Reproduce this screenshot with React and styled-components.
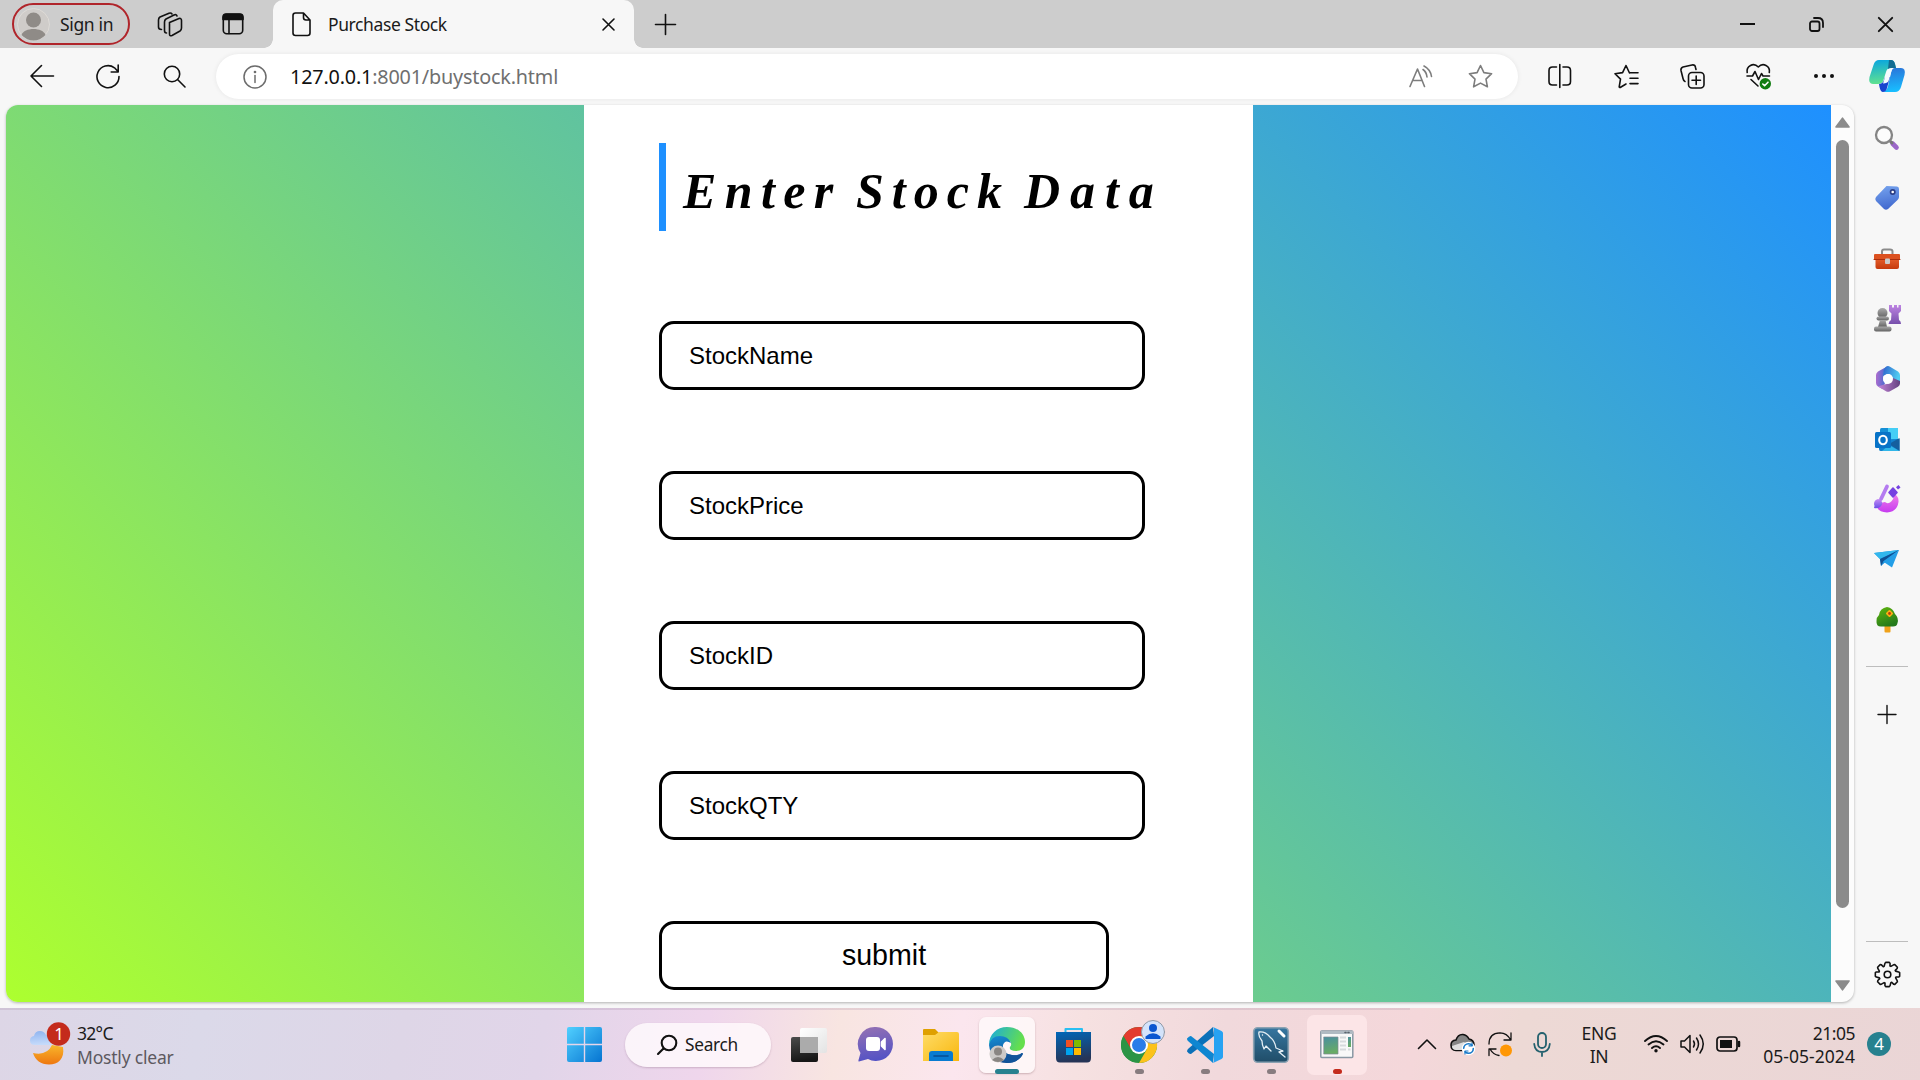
import React from "react";
import styled, { createGlobalStyle } from "styled-components";

const GlobalStyle = createGlobalStyle`
  * { box-sizing: border-box; }
  body { margin: 0; overflow: hidden; background: #f7f7f7; }
  svg { display: block; flex: none; overflow: visible; }
`;

const UI = `"Noto Sans", "Open Sans", sans-serif`;

const Desktop = styled.div`
  width: 1920px;
  height: 1080px;
  display: flex;
  flex-direction: column;
  overflow: hidden;
  background: #f7f7f7;
  font-family: ${UI};
  color: #1a1a1a;
`;

const Label = styled.span`
  font-size: ${(p) => p.$size || 18}px;
  letter-spacing: ${(p) => p.$track || 0}px;
  color: ${(p) => p.$color || "#1b1b1b"};
  line-height: ${(p) => p.$line || 24}px;
  white-space: nowrap;
`;

const Cell = styled.div`
  width: ${(p) => p.$w}px;
  height: 100%;
  margin-left: ${(p) => p.$ml || 0}px;
  flex: none;
  display: flex;
  align-items: center;
  justify-content: center;
`;

/* ---------- tab strip ---------- */

const TabStrip = styled.header`
  height: 48px;
  flex: none;
  display: flex;
  align-items: center;
  background: #cdcdcd;
`;

const SignIn = styled.div`
  width: 118px;
  height: 42px;
  margin-left: 12px;
  padding-left: 3px;
  display: flex;
  align-items: center;
  gap: 10px;
  border: 2px solid #b0252b;
  border-radius: 21px;
`;

const Tab = styled.div`
  position: relative;
  width: 361px;
  height: 48px;
  margin-left: 10px;
  padding-left: 19px;
  display: flex;
  align-items: center;
  background: #f7f7f7;
  border-radius: 10px 10px 0 0;
  &::before, &::after {
    content: "";
    position: absolute;
    bottom: 0;
    width: 9px;
    height: 9px;
  }
  &::before { left: -9px; background: radial-gradient(circle at 0 0, #cdcdcd 8.5px, #f7f7f7 9px); }
  &::after { right: -9px; background: radial-gradient(circle at 100% 0, #cdcdcd 8.5px, #f7f7f7 9px); }
`;

const TabTitle = styled(Label)`
  width: 274px;
  margin-left: 17px;
`;

const WindowButtons = styled.div`
  height: 100%;
  margin-left: auto;
  display: flex;
`;

/* ---------- toolbar ---------- */

const Toolbar = styled.nav`
  height: 57px;
  flex: none;
  padding: 0 0 1px 9px;
  display: flex;
  align-items: center;
`;

const AddressBar = styled.div`
  width: 1302px;
  height: 45px;
  margin: 1px 9px 0;
  padding-left: 27px;
  display: flex;
  align-items: center;
  background: #fff;
  border-radius: 23px;
  box-shadow: 0 0 5px rgba(0, 0, 0, 0.07);
`;

const Url = styled(Label)`
  flex: 1;
  margin-left: 23px;
  b { font-weight: 400; color: #111; }
`;

/* ---------- content ---------- */

const Body = styled.main`
  height: 903px;
  flex: none;
  display: flex;
`;

const Viewport = styled.section`
  width: 1848px;
  height: 897px;
  margin-left: 6px;
  display: flex;
  overflow: hidden;
  background: #fcfcfc;
  border-radius: 12px;
  box-shadow: 0 1px 3px rgba(0, 0, 0, 0.28);
`;

const Page = styled.div`
  width: 1825px;
  height: 897px;
  padding-left: 578px;
  background: linear-gradient(45deg, greenyellow, dodgerblue);
`;

const Form = styled.form`
  width: 669px;
  height: 897px;
  padding: 38px 0 0 75px;
  background: #fff;
`;

const Heading = styled.h1`
  height: 88px;
  margin: 0 0 90px;
  padding: 20px 0 0 17px;
  display: flex;
  border-left: 7px solid dodgerblue;
  font: italic bold 50px/56px "Liberation Serif", serif;
  color: #000;
`;

const Word = styled.span`
  width: ${(p) => p.$w}px;
  letter-spacing: ${(p) => p.$track}px;
  white-space: nowrap;
`;

const Field = styled.input`
  display: block;
  width: 486px;
  height: 69px;
  margin: 0 0 81px;
  padding: 0 27px;
  border: 3px solid #000;
  border-radius: 15px;
  background: #fff;
  color: #000;
  font: 24px "Liberation Sans", Arial, sans-serif;
  outline: none;
  &::placeholder { color: #000; opacity: 1; }
`;

const Submit = styled.button`
  display: block;
  width: 450px;
  height: 69px;
  padding: 0;
  border: 3px solid #000;
  border-radius: 15px;
  background: #fff;
  color: #000;
  font: 28.6px "Liberation Sans", Arial, sans-serif;
`;

const Scrollbar = styled.div`
  width: 23px;
  padding: 12px 0 11px 4px;
  display: flex;
  flex-direction: column;
`;

const Thumb = styled.div`
  width: 13px;
  height: 768px;
  margin: 12px 0 auto 1px;
  border-radius: 7px;
  background: #8b8b8b;
`;

const Sidebar = styled.aside`
  width: 66px;
  display: flex;
  flex-direction: column;
  align-items: center;
  padding-top: 3px;
`;

const SideItem = styled.div`
  height: 60.2px;
  flex: none;
  display: flex;
  align-items: center;
`;

const Divider = styled.hr`
  width: 42px;
  height: 1px;
  flex: none;
  margin: ${(p) => p.$m};
  border: 0;
  background: #bdbdbd;
`;

/* ---------- taskbar ---------- */

const Taskbar = styled.footer`
  height: 72px;
  flex: none;
  display: flex;
  align-items: center;
  background:
    linear-gradient(rgba(150, 120, 150, 0.2), rgba(150, 120, 150, 0.2)) 0 0 / 1410px 2px no-repeat,
    linear-gradient(100deg, #ddd6e6 0, #dbd9e9 200px, #ded6e7 400px, #e1d5e9 540px, #efd6ec 700px, #f8e5e1 830px, #fbe6ee 950px, #f6e1e1 1070px, #f1d9dc 1210px, #f4d7da 1400px, #edd9d5 1500px, #ead5d6 1920px);
`;

const Weather = styled.div`
  width: 551px;
  padding-left: 29px;
  display: flex;
  align-items: center;
  gap: 11px;
`;

const Stack = styled.div`
  width: ${(p) => (p.$w ? `${p.$w}px` : "auto")};
  padding-top: 1px;
  display: flex;
  flex-direction: column;
  align-items: ${(p) => p.$align || "flex-start"};
`;

const SearchPill = styled.div`
  width: 146px;
  height: 44px;
  margin: 2px 5px 0 8px;
  padding-left: 32px;
  display: flex;
  align-items: center;
  gap: 8px;
  border-radius: 22px;
  background: rgba(255, 250, 252, 0.82);
  box-shadow: 0 1px 2px rgba(100, 60, 90, 0.25);
`;

const TaskButton = styled.div`
  position: relative;
  width: 66px;
  height: 72px;
  flex: none;
  padding-top: 1px;
  display: flex;
  align-items: center;
  justify-content: center;
`;

const Tile = styled.div`
  width: ${(p) => p.$s}px;
  height: ${(p) => p.$s}px;
  display: flex;
  align-items: center;
  justify-content: center;
  border-radius: 7px;
  background: ${(p) => p.$bg};
  box-shadow: ${(p) => (p.$edge ? "0 1px 2px rgba(120,80,90,.35)" : "none")};
`;

const Running = styled.i`
  position: absolute;
  bottom: 6px;
  left: 50%;
  width: ${(p) => p.$w || 9}px;
  height: 5px;
  margin-left: ${(p) => -(p.$w || 9) / 2}px;
  border-radius: 3px;
  background: ${(p) => p.$c || "#877c7f"};
`;

const Count = styled.div`
  width: 24px;
  height: 24px;
  margin-left: 12px;
  border-radius: 50%;
  background: #27818f;
  color: #fff;
  font-size: 17px;
  line-height: 24px;
  text-align: center;
`;

const Svg = ({ w, h = w, children, sw = 1.6, c = "#111", ...r }) => (
  <svg width={w} height={h} viewBox={`0 0 ${w} ${h}`} fill="none" stroke={c} strokeWidth={sw} strokeLinecap="round" strokeLinejoin="round" {...r}>
    {children}
  </svg>
);

const Grad = ({ id, a, b, x2 = 1, y2 = 1 }) => (
  <linearGradient id={id} x1="0" y1="0" x2={x2} y2={y2}>
    <stop offset="0" stopColor={a} />
    <stop offset="1" stopColor={b} />
  </linearGradient>
);

const Star = "M12.5 1.5 15.9 8.6 23.6 9.7 18 15.1 19.4 22.8 12.5 19.1 5.6 22.8 7 15.1 1.4 9.7 9.1 8.6Z";

const Avatar = () => (
  <Svg w={33} stroke="none">
    <circle cx="16.5" cy="16.5" r="16" fill="#cfccc9" stroke="#dedbd7" strokeWidth="1" />
    <circle cx="16.5" cy="12" r="7.5" fill="#8f8b87" />
    <path d="M4.5 27C7 19 26 19 28.500 27Q23 32.500 16.500 32.500T4.500 27Z" fill="#8f8b87" />
  </Svg>
);

const Workspaces = () => (
  <Svg w={26} h={25}>
    <path d="M12.500 10.500 22 6.500Q24.500 6 24.500 8.500V16Q24.500 18 23 19L15 23.500Q12.500 24.500 12.500 22V12Z" />
    <path d="M9.500 21Q7.500 21 7.500 18.500V10Q7.500 8 9 7L17 3Q19.500 2 20 4" />
    <path d="M4.500 17.500Q1.500 17.500 1.500 15V8Q1.500 6 3 5L12 1.200Q14 .5 15 2" />
  </Svg>
);

const TabActions = () => (
  <Svg w={22}>
    <rect x="1.300" y="1.300" width="19.400" height="19.400" rx="3.500" />
    <path d="M1 6.500V4Q1 1 4 1H18Q21 1 21 4V6.500Z" fill="#111" />
    <path d="M7 7V20.500" />
  </Svg>
);

const FileIcon = () => (
  <Svg w={19} h={25}>
    <path d="M11.500 1H3.500Q1 1 1 3.500V21Q1 23.500 3.500 23.500H15.500Q18 23.500 18 21V8ZM11.500 1V5.500Q11.500 8 14 8H18" />
  </Svg>
);

const BackIcon = () => <Svg w={24}><path d="M23.500 12H1M11.500 1.500 1 12 11.500 22.500" /></Svg>;
const RefreshIcon = () => <Svg w={24} h={25}><path d="M23 12.500A11 11 0 1 1 18.500 3.800L22 7.500M22.200 1V8H15.200" /></Svg>;
const LensIcon = () => <Svg w={23}><circle cx="9" cy="9" r="7.700" /><path d="M14.800 14.800 22 22" /></Svg>;
const InfoIcon = () => (
  <Svg w={24} c="#6c6c6c" sw={1.500}>
    <circle cx="12" cy="12" r="11" /><path d="M12 10.500V17.500" /><circle cx="12" cy="7" r=".6" fill="#6c6c6c" />
  </Svg>
);
const ReadAloud = () => (
  <Svg w={24} c="#7d7d7d"><path d="M1 21.500 8.500 4 15.500 21.500M3.500 15.500H13M14 4.500Q17.500 7 18 12M15 1Q21.500 4.500 22.500 11.500" /></Svg>
);
const SplitIcon = () => (
  <Svg w={24}><path d="M8.500 3H4.500Q1 3 1 6.500V17.500Q1 21 4.500 21H8.500M15 3H19Q22.500 3 22.500 6.500V17.500Q22.500 21 19 21H15M11.800 .5V23.500" /></Svg>
);
const FavList = () => (
  <Svg w={25}>
    <path d="M15.500 9 12 1.500 8.600 8.600 1 9.700 6.500 15.100 5.200 22.800Q5.500 24 7 23L12 20M16 8.800H24M16 14.200H24M16 19.600H24" />
  </Svg>
);
const Collections = () => (
  <Svg w={25}>
    <rect x="8.500" y="8.500" width="15.500" height="15.500" rx="3.500" />
    <path d="M16.200 12V20.500M12 16.200H20.500M5 17.500Q3.500 17 3 14.500L1 6.500Q.5 4 3 3L12 1Q15 .5 15.500 3.500L16 5.500" />
  </Svg>
);
const Health = () => (
  <Svg w={25} h={26}>
    <path d="M1.200 9.500C0 3 7.500-1 12.300 4 17-1 24.500 3 23.300 9.500M1 13H6.500L9 8.500 12.500 16.500 15.500 10.500 17 13H23.500M5 16.500 12 23" />
    <circle cx="19.300" cy="20.700" r="5.700" fill="#107c10" stroke="none" />
    <path d="M16.800 21 18.600 22.700 22 19.200" stroke="#fff" />
  </Svg>
);
const Dots = () => <Svg w={22} h={6} stroke="none" fill="#111"><circle cx="3" cy="3" r="2" /><circle cx="11" cy="3" r="2" /><circle cx="19" cy="3" r="2" /></Svg>;

const Copilot = () => (
  <Svg w={36} h={34} stroke="none">
    <defs>
      <Grad id="cp1" a="#08a5e0" b="#5fe191" x2={0.1} />
      <Grad id="cp2" a="#2b73d8" b="#18bdff" x2={0.1} />
    </defs>
    <path d="M10 1H22Q25 1 26 5L27 9H22Q18 9 17 13L14.500 21Q13.500 25 9 25H4Q-1 25 .5 18L4.500 6Q6 1 10 1Z" fill="url(#cp1)" />
    <path d="M20 1H22Q25 1 26 5L27 9H22Q20 9 19 10Z" fill="#136b91" />
    <path d="M26 9H32Q37 9 35.500 16L32 28Q30.500 33 26 33H14Q18 32 19 27L22 14Q23 9 26 9Z" fill="url(#cp2)" />
    <path d="M10 25Q13.500 25 15 21L16 18H21L18 29Q17 33 14 33 11.500 33 10.500 28Z" fill="#1744cf" />
    <path d="M19 10H23L19.500 22Q18.500 24 14 24.500L17 15Z" fill="#f5fbff" />
  </Svg>
);

/* sidebar drawings, each on a 26px grid */
const SideSearch = () => (
  <Svg w={26}>
    <path d="M18.500 18.500 22.500 22.500" stroke="#9b66c9" strokeWidth="4.600" />
    <path d="M16 16 18 18" stroke="#777" strokeWidth="3" />
    <circle cx="10" cy="10" r="8" stroke="#858585" strokeWidth="2.300" fill="#fcfcfc" />
  </Svg>
);
const SideTag = () => (
  <Svg w={26} stroke="none">
    <defs><Grad id="tag" a="#77a5ef" b="#436bd0" x2={0.2} /></defs>
    <path d="M12.500 1 23 1.500Q25 1.500 25 4V12Q25 13.500 23.500 15L14 24Q12 25.500 10 24L2 16Q.5 14 2 12Z" fill="url(#tag)" />
    <circle cx="18.700" cy="7" r="3" fill="#2b3e86" /><circle cx="18.700" cy="7" r="1.300" fill="#fff" />
  </Svg>
);
const SideToolbox = () => (
  <Svg w={26} h={21} stroke="none">
    <defs><Grad id="tb" a="#ed6632" b="#c53a0d" x2={0} /></defs>
    <path d="M8 8V3.500Q8 1.500 10 1.500H16Q18.500 1.500 18.500 3.500V8" stroke="#8b8b8b" strokeWidth="2" />
    <rect x="1.500" y="8" width="23.500" height="13" rx="2" fill="url(#tb)" />
    <rect x="0" y="6" width="26" height="6" rx="1" fill="#dc5120" />
    <path d="M0 11.500H26" stroke="#a92e0e" strokeWidth="1" />
    <rect x="11" y="10.500" width="5" height="5.500" rx="1" fill="#cbcbcb" />
  </Svg>
);
const SideChess = () => (
  <Svg w={27} stroke="none">
    <defs><Grad id="ch" a="#bd83e2" b="#7750ac" x2={0} /><Grad id="pn" a="#aaa" b="#626262" x2={0} /></defs>
    <path d="M15 0H18V2.500H20V0H23V2.500H24.500V0H27V6L24.500 8.500 25 15Q27 16 27 19H14.500Q15 16 17 15L17.500 8.500 15 6Z" fill="url(#ch)" />
    <g fill="url(#pn)"><circle cx="8.500" cy="8" r="5" /><rect x="2.500" y="11.500" width="12.500" height="4" rx="2" /><path d="M6 15H11.500L13 22H4Z" /><rect x="0" y="21.500" width="17.500" height="5" rx="2" /></g>
  </Svg>
);
const Side365 = () => (
  <Svg w={25} h={26} stroke="none">
    <defs><Grad id="o1" a="#b36dce" b="#426bd0" x2={0.9} y2={0.1} /><Grad id="o2" a="#2e62cb" b="#50ccf2" x2={1} y2={0.3} /><Grad id="o3" a="#c585d9" b="#644280" x2={1} y2={0} /></defs>
    <path d="M13 0 3 5.500Q1 7 1 9V17Q1 19 3 20.500L7.500 23 10 17Q8 15 8 12.500L9 5Z" fill="url(#o1)" />
    <path d="M11 .7Q13-.5 15 .7L23 5.500Q25 7 25 9V17L18 13Q17 8 13 8L8 10Q8 3 11 .7Z" fill="url(#o2)" />
    <path d="M25 15V17.500Q25 19.500 23 20.700L15 25.200Q13 26.500 11 25.200L3 20.500 9 18.500Q15 18 18 12Z" fill="url(#o3)" />
    <circle cx="13" cy="13" r="4.900" fill="#fff" />
  </Svg>
);
const SideOutlook = () => (
  <Svg w={24} h={25} stroke="none">
    <rect x="5" y="1" width="18" height="18" rx="1.500" fill="#168fd6" /><path d="M13 1H23V12H13Z" fill="#45cef6" />
    <path d="M4 14 24.500 12V24H5.500Q4 24 4 22Z" fill="#1282ce" /><path d="M24.500 11V24L14 17Z" fill="#155f9e" /><path d="M14 18 24.500 24H7Z" fill="#31b6e8" />
    <rect x="0" y="5" width="16" height="16" rx="1.500" fill="#0873c7" /><ellipse cx="8" cy="13" rx="3.800" ry="4.200" stroke="#fff" strokeWidth="2.100" />
  </Svg>
);
const SideDesigner = () => (
  <Svg w={28} h={30} stroke="none">
    <defs><Grad id="ds" a="#f07ee8" b="#c63bf0" x2={0} /><Grad id="dp" a="#c78bf5" b="#6a4fe8" x2={0} /></defs>
    <path d="M21 10Q26 12 25.500 18 24 28 14 28.500 4 28 2.500 20L12 18Q14 20 17 18.500 21 16 21 10Z" fill="url(#ds)" />
    <path d="M14 2.500 8 15" stroke="#b47bf0" strokeWidth="3.800" />
    <path d="M5 15Q10 16 9 20.500 7 25 1 24 2 22 1 20 1 16 5 15Z" fill="url(#dp)" />
    <path d="M20 4 24 8.500 20 13 16 8.500Z" fill="#7641e1" stroke="#7641e1" /><path d="M25.500 1 27.500 3.500 25 5.500 23 3.200Z" fill="#7641e1" />
  </Svg>
);
const SidePlane = () => (
  <Svg w={26} h={18} stroke="none">
    <path d="M0 3 25 0 7 16 6 9Z" fill="#1b91dd" /><path d="M0 3 25 0 6 9Z" fill="#32b7ed" /><path d="M6 9 25 0 9 12 7 16Z" fill="#105194" /><path d="M25 0 18 17.500 9 11.500Z" fill="#239ee7" />
  </Svg>
);
const SideTree = () => (
  <Svg w={22} h={25} stroke="none">
    <defs><Grad id="tr" a="#62b80d" b="#247a1b" x2={0.5} /></defs>
    <rect x="8.500" y="16" width="6" height="9.500" rx="1" fill="#f0a21b" />
    <path d="M11 0Q17 1 19 7 23 11 21.500 16 21 19.500 17 19.500H5Q0 19.500 .5 14 .5 10 3 8 4 1 11 0Z" fill="url(#tr)" />
    <path d="M13.500 4 16 6.500 13.500 9 11 6.500Z" fill="#ffad13" stroke="#ffad13" strokeWidth="2" /><circle cx="13.500" cy="6.500" r="1.400" fill="#b83d10" />
  </Svg>
);

const TOOTH = [[-13, 11.4], [-8.600, 12.3], [8.600, 12.3], [13, 11.4], [16.500, 8.8], [22.500, 8.8]];
const GEAR_POINTS = Array.from({ length: 8 }, (_, i) =>
  TOOTH.map(([d, r]) => {
    const a = ((i * 45 + d) * Math.PI) / 180;
    return `${(12.5 + r * Math.sin(a)).toFixed(2)},${(12.5 - r * Math.cos(a)).toFixed(2)}`;
  }).join(" ")
).join(" ");
const GearIcon = () => <Svg w={25}><polygon points={GEAR_POINTS} /><circle cx="12.500" cy="12.500" r="3.300" /></Svg>;

/* taskbar drawings */
const WeatherIcon = () => (
  <Svg w={37} h={42} stroke="none">
    <defs><Grad id="mo" a="#f8b62b" b="#ee7710" x2={0} /><Grad id="cl" a="#8eb4f0" b="#c5dafa" x2={0.1} /></defs>
    <path d="M34 24C36 36 29 41.500 20 41.500 12 41.500 6 37 4 30Q18 33 23 22Z" fill="url(#mo)" />
    <path d="M6 22Q1 22 1 17.500 1 13.500 5 13 6 8 11 8 15 8 17 12 22 13 22 22Z" fill="url(#cl)" />
    <circle cx="29.500" cy="11" r="11.700" fill="#c42b1c" />
    <text x="30" y="17" fill="#fff" fontSize="17" textAnchor="middle" fontFamily={UI}>1</text>
  </Svg>
);
const StartIcon = () => (
  <Svg w={35} stroke="none">
    <defs><linearGradient id="st" gradientUnits="userSpaceOnUse" x1="0" y1="0" x2="35" y2="35"><stop stopColor="#51d0ff" /><stop offset="1" stopColor="#0674d1" /></linearGradient></defs>
    <path d="M2 0H16.800V16.800H0V2Q0 0 2 0ZM18.200 0H33Q35 0 35 2V16.800H18.200ZM0 18.200H16.800V35H2Q0 35 0 33ZM18.200 18.200H35V33Q35 35 33 35H18.200Z" fill="url(#st)" />
  </Svg>
);
const TaskView = () => (
  <Svg w={36} h={34} stroke="none">
    <defs><Grad id="tv" a="#4b4b4b" b="#171717" x2={0.2} /><Grad id="tw" a="#fff" b="#e3e3e3" /></defs>
    <rect x="0" y="9" width="27" height="25" rx="2" fill="url(#tv)" /><rect x="9" y="0" width="27" height="25" rx="2" fill="url(#tw)" /><rect x="9" y="9" width="18" height="16" fill="#ababab" />
  </Svg>
);
const ChatIcon = () => (
  <Svg w={35} stroke="none">
    <defs><Grad id="ct" a="#9672b3" b="#5553c4" x2={0.2} /></defs>
    <path d="M18 0A17 17 0 1 1 10 32L1 34.500Q0 34.500 .5 33L2.500 26A17 17 0 0 1 18 0Z" fill="url(#ct)" />
    <rect x="8" y="10" width="14" height="14" rx="3" fill="#fff" /><path d="M23.500 15 27 11.500V22.500L23.500 19Z" fill="#fff" stroke="#fff" />
  </Svg>
);
const FolderIcon = () => (
  <Svg w={36} h={34} stroke="none">
    <defs><Grad id="fd" a="#ffdc67" b="#f8b70e" /></defs>
    <path d="M0 2Q0 1 1 1H12L16 5V10H0Z" fill="#dfa000" /><path d="M0 7H12L16 4H34Q36 4 36 6V33H0Z" fill="url(#fd)" />
    <path d="M6 33V26Q6 23 9 23H27Q30 23 30 26V33Z" fill="#087bd1" /><path d="M11 28H25" stroke="#064d92" />
  </Svg>
);
const EdgeIcon = () => (
  <Svg w={36} stroke="none">
    <defs><Grad id="e1" a="#18a9e1" b="#65df4d" x2={1} y2={0.3} /><Grad id="e2" a="#168ed5" b="#0d4c92" x2={0.3} /></defs>
    <path d="M0 18C0 7 8 0 18 0 29 0 36 7 36 15 36 21 32 24 27 24 22 24 20 22 21 20 24 17 21 12 16 12 9 12 3 15 0 18Z" fill="url(#e1)" />
    <path d="M0 18Q2 9 11 9 19 9 22 16 16 12 14 18 13 27 23 28 30 29 33 26 35 26 32 30 27 36 18 36 2 36 0 18Z" fill="url(#e2)" />
    <path d="M13 20Q13 27 23 28 30 29 33 26 35 26 32 30 27 36 18 36 7 32 13 20Z" fill="#11549a" />
    <circle cx="9" cy="27" r="8.500" fill="#ccc9c7" /><circle cx="9" cy="24.500" r="4" fill="#898582" /><path d="M3 33Q9 27 15 33 9 37 3 33Z" fill="#898582" />
  </Svg>
);
const StoreIcon = () => (
  <Svg w={35} h={36} stroke="none">
    <defs><Grad id="so" a="#0067b9" b="#263456" x2={0.2} /></defs>
    <path d="M9.500 8V2H26V8" stroke="#28bff2" strokeWidth="2" strokeLinecap="butt" />
    <path d="M0 5H35V31Q35 35.500 31 35.500H4Q0 35.500 0 31Z" fill="url(#so)" />
    <rect x="10" y="13" width="7" height="7" fill="#f25022" /><rect x="18" y="13" width="7" height="7" fill="#7fba00" /><rect x="10" y="21" width="7" height="7" fill="#00a4ef" /><rect x="18" y="21" width="7" height="7" fill="#ffb900" />
  </Svg>
);
const ChromeIcon = () => (
  <Svg w={36} stroke="none">
    <circle cx="18" cy="18" r="18" fill="#2b9445" />
    <path d="M18 18 2.400 9A18 18 0 0 1 33.600 9Z" fill="#e33b2e" />
    <path d="M18 9H33.600A18 18 0 0 1 18 36L26 22Z" fill="#fcc21b" />
    <path d="M2.400 9 10.200 22.500 18 9Z" fill="#e33b2e" /><path d="M2.400 9 10.200 22.500 18 27 12 35A18 18 0 0 1 2.400 9Z" fill="#2b9445" />
    <circle cx="18" cy="18" r="9" fill="#fff" /><circle cx="18" cy="18" r="7" fill="#2b7de9" />
    <circle cx="32" cy="5" r="11.500" fill="#d4e3fa" stroke="#929aa6" strokeWidth="1" /><circle cx="32" cy="1" r="4" fill="#0b57d0" /><path d="M24.500 12V9.500Q32 3 39.500 9.500V12Z" fill="#0b57d0" />
  </Svg>
);
const CodeIcon = () => (
  <Svg w={36} stroke="none">
    <path d="M26 0 27 9 4 27Q2.500 27.500 0 24.500 0 23 1 22Z" fill="#0b70b8" /><path d="M26 36 27 27 4 9Q2.500 8.500 0 11.500 0 13 1 14Z" fill="#0e86d1" />
    <path d="M26 0 34.500 4Q36 5 36 6V30Q36 31 34.500 32L26 36Q27 35 27 33V3Q27 1 26 0Z" fill="#27a2f2" />
  </Svg>
);
const WorkbenchIcon = () => (
  <Svg w={36} stroke="none">
    <defs><Grad id="wb" a="#3676a0" b="#204d68" x2={0} /></defs>
    <rect x=".7" y=".7" width="34.600" height="34.600" rx="4" fill="url(#wb)" stroke="#8ba2b2" />
    <path d="M11 22Q9 18 9 14 5 9 6 5 12 4 17 10 22 14 23 21L30 24 26 25 32 30M11 22 13 19 18 24" stroke="#e5eff5" strokeWidth="1.300" />
    <circle cx="9.500" cy="8" r=".7" fill="#fff" /><path d="M26 4 31 9" stroke="#fff" strokeWidth="3" />
  </Svg>
);
const WindowIcon = () => (
  <Svg w={34} h={29} stroke="none">
    <defs><Grad id="wi" a="#4a8fa0" b="#68ac64" x2={0.2} /></defs>
    <rect x=".8" y="1" width="32" height="26.500" rx="1" fill="#f8f8f8" stroke="#8998a4" strokeWidth="1.500" /><path d="M1 1H33V4H1Z" fill="#b0bac2" />
    <path d="M25 2.500H31" stroke="#59636c" strokeDasharray="1 2" />
    <rect x="4" y="7" width="14" height="17" fill="url(#wi)" stroke="#808a94" strokeWidth=".7" /><path d="M20 7.500H26M20 11.500H26M20 15.500H26M20 19.500H26M28 19.500H30.500" stroke="#d6dadc" strokeWidth="1.800" strokeLinecap="butt" /><path d="M28 7H31V17H28Z" fill="url(#wi)" />
  </Svg>
);
const CloudIcon = () => (
  <Svg w={26} h={23}>
    <path d="M6 17.500Q1 17 1 12 1 7.500 6 7 8 1 13 1.500 17 2 19 6 24 7 24 12 24 17.500 19 17.500Z" fill="#858585" /><path d="M6 17Q2 17 2 13L14 9 22 15V17Z" fill="#dedede" stroke="none" />
    <circle cx="18.500" cy="15.500" r="6.800" fill="#fff" stroke="none" /><circle cx="18.500" cy="15.500" r="4.800" stroke="#1879c8" strokeWidth="1.600" strokeDasharray="11 4" /><path d="M22 10V12.800H19M15 21V18H18" stroke="#1879c8" strokeWidth="1.200" />
  </Svg>
);
const SyncIcon = () => (
  <Svg w={25} sw={1.300}>
    <path d="M1 12Q1 1 12 .8 19 1 22.500 7.500M23 1V8H16M11 23.500Q5 22.500 2 17M1 23.500V17H8" /><circle cx="18" cy="18.500" r="6" fill="#ff9705" stroke="none" />
  </Svg>
);
const MicIcon = () => (
  <Svg w={18} h={25} c="#24616e" sw={1.800}><rect x="5" y="1" width="8" height="15" rx="4" /><path d="M1.200 12Q2 20 9 20T16.800 12M9 20V24" /></Svg>
);
const WifiIcon = () => (
  <Svg w={24} h={18} sw={1.900}><path d="M1 6Q12-4 23 6M4.500 9.500Q12 3 19.500 9.500M8 13Q12 9.500 16 13" /><circle cx="12" cy="15.800" r="1.700" fill="#111" stroke="none" /></Svg>
);
const SpeakerIcon = () => (
  <Svg w={25} h={20} sw={1.500}><path d="M1 7H4.500L10 1.500V18.500L4.500 13H1ZM13.500 7Q15.500 10 13.500 13M16.500 4Q20.500 10 16.500 16M20 1Q26.500 10 20 19" /></Svg>
);
const BatteryIcon = () => (
  <Svg w={24} h={16} sw={1.700}><rect x="1" y="1" width="20" height="14" rx="3" /><rect x="4" y="4" width="12" height="8" fill="#111" stroke="none" /><path d="M23 6V10" strokeWidth="2.500" /></Svg>
);

const FIELDS = ["StockName", "StockPrice", "StockID", "StockQTY"];
const SIDE = [SideSearch, SideTag, SideToolbox, SideChess, Side365, SideOutlook, SideDesigner, SidePlane, SideTree];
const TOOLS = [SplitIcon, FavList, Collections, Health, Dots];
const PINNED = [TaskView, ChatIcon, FolderIcon];

export default function App() {
  return (
    <Desktop>
      <GlobalStyle />
      <TabStrip>
        <SignIn><Avatar /><Label $size={17.5} $track={-0.35}>Sign in</Label></SignIn>
        <Cell $w={66} $ml={7}><Workspaces /></Cell>
        <Cell $w={60}><TabActions /></Cell>
        <Tab>
          <FileIcon />
          <TabTitle $size={17.5} $track={-0.4}>Purchase Stock</TabTitle>
          <Svg w={13}><path d="M1 1 12 12M12 1 1 12" /></Svg>
        </Tab>
        <Cell $w={63}><Svg w={21}><path d="M10.500 .5V20.500M.5 10.500H20.500" /></Svg></Cell>
        <WindowButtons>
          <Cell $w={69}><Svg w={15} h={2} sw={2}><path d="M0 1H15" strokeLinecap="butt" /></Svg></Cell>
          <Cell $w={69}><Svg w={15} sw={1.8}><rect x="1" y="4.500" width="9.500" height="9.500" rx="2" /><path d="M5 1H9Q14 1 14 6V10" /></Svg></Cell>
          <Cell $w={69}><Svg w={15} sw={1.9}><path d="M.8 .8 14.200 14.200M14.200 .8 .8 14.200" /></Svg></Cell>
        </WindowButtons>
      </TabStrip>

      <Toolbar>
        <Cell $w={66}><BackIcon /></Cell>
        <Cell $w={66}><RefreshIcon /></Cell>
        <Cell $w={66}><LensIcon /></Cell>
        <AddressBar>
          <InfoIcon />
          <Url $size={19.8} $track={-0.18} $color="#6f6f6f"><b>127.0.0.1</b>:8001/buystock.html</Url>
          <Cell $w={59}><ReadAloud /></Cell>
          <Cell $w={60}><Svg w={25} c="#7d7d7d"><path d={Star} /></Svg></Cell>
          <Cell $w={8} />
        </AddressBar>
        {TOOLS.map((Tool, i) => <Cell key={i} $w={66}><Tool /></Cell>)}
        <Cell $w={60}><Copilot /></Cell>
      </Toolbar>

      <Body>
        <Viewport>
          <Page>
            <Form>
              <Heading>
                <Word $w={173} $track={8.4}>Enter</Word>
                <Word $w={168} $track={8}>Stock</Word>
                <Word $w={140} $track={9.9}>Data</Word>
              </Heading>
              {FIELDS.map((name) => <Field key={name} placeholder={name} />)}
              <Submit type="button">submit</Submit>
            </Form>
          </Page>
          <Scrollbar>
            <Svg w={15} h={11} c="#8b8b8b"><path d="M1 10 7.500 1.200 14 10Z" fill="#8b8b8b" /></Svg>
            <Thumb />
            <Svg w={15} h={11} c="#8b8b8b"><path d="M1 1 7.500 9.800 14 1Z" fill="#8b8b8b" /></Svg>
          </Scrollbar>
        </Viewport>
        <Sidebar>
          {SIDE.map((Icon, i) => <SideItem key={i}><Icon /></SideItem>)}
          <Divider $m="16px 0 18px" />
          <SideItem><Svg w={19} sw={1.4}><path d="M9 .5V18.500M0 9.500H18" /></Svg></SideItem>
          <Divider $m="196px 0 3px" />
          <SideItem><GearIcon /></SideItem>
        </Sidebar>
      </Body>

      <Taskbar>
        <Weather>
          <WeatherIcon />
          <Stack>
            <Label $size={17.5} $track={-0.7}>32°C</Label>
            <Label $size={17.5} $track={-0.2} $color="#5d5960">Mostly clear</Label>
          </Stack>
        </Weather>
        <TaskButton><StartIcon /></TaskButton>
        <SearchPill>
          <Svg w={20} sw={2.1}><circle cx="12" cy="8" r="7.300" /><path d="M6.500 13.500 1 19" /></Svg>
          <Label $size={17.3} $track={-0.3}>Search</Label>
        </SearchPill>
        {PINNED.map((Icon, i) => <TaskButton key={i}><Icon /></TaskButton>)}
        <TaskButton><Tile $s={56} $bg="rgba(255,250,251,.8)" $edge><EdgeIcon /></Tile><Running $w={24} $c="#27818f" /></TaskButton>
        <TaskButton><StoreIcon /></TaskButton>
        <TaskButton><ChromeIcon /><Running /></TaskButton>
        <TaskButton><CodeIcon /><Running /></TaskButton>
        <TaskButton><WorkbenchIcon /><Running /></TaskButton>
        <TaskButton><Tile $s={60} $bg="#fce5e7"><WindowIcon /></Tile><Running $c="#c42b1c" /></TaskButton>
        <Cell $w={34} $ml={40}><Svg w={18} h={10}><path d="M.5 9.500 9 1 17.500 9.500" /></Svg></Cell>
        <Cell $w={38}><CloudIcon /></Cell>
        <Cell $w={36}><SyncIcon /></Cell>
        <Cell $w={47}><MicIcon /></Cell>
        <Stack $w={68} $align="center">
          <Label $size={17.5} $track={-0.3} $line={23}>ENG</Label>
          <Label $size={17.5} $track={-0.3} $line={23}>IN</Label>
        </Stack>
        <Cell $w={36} $ml={5}><WifiIcon /></Cell>
        <Cell $w={36}><SpeakerIcon /></Cell>
        <Cell $w={36}><BatteryIcon /></Cell>
        <Stack $w={109} $align="flex-end">
          <Label $size={17.5} $track={-0.5} $line={23}>21:05</Label>
          <Label $size={17.5} $track={0.05} $line={23}>05-05-2024</Label>
        </Stack>
        <Count>4</Count>
      </Taskbar>
    </Desktop>
  );
}
